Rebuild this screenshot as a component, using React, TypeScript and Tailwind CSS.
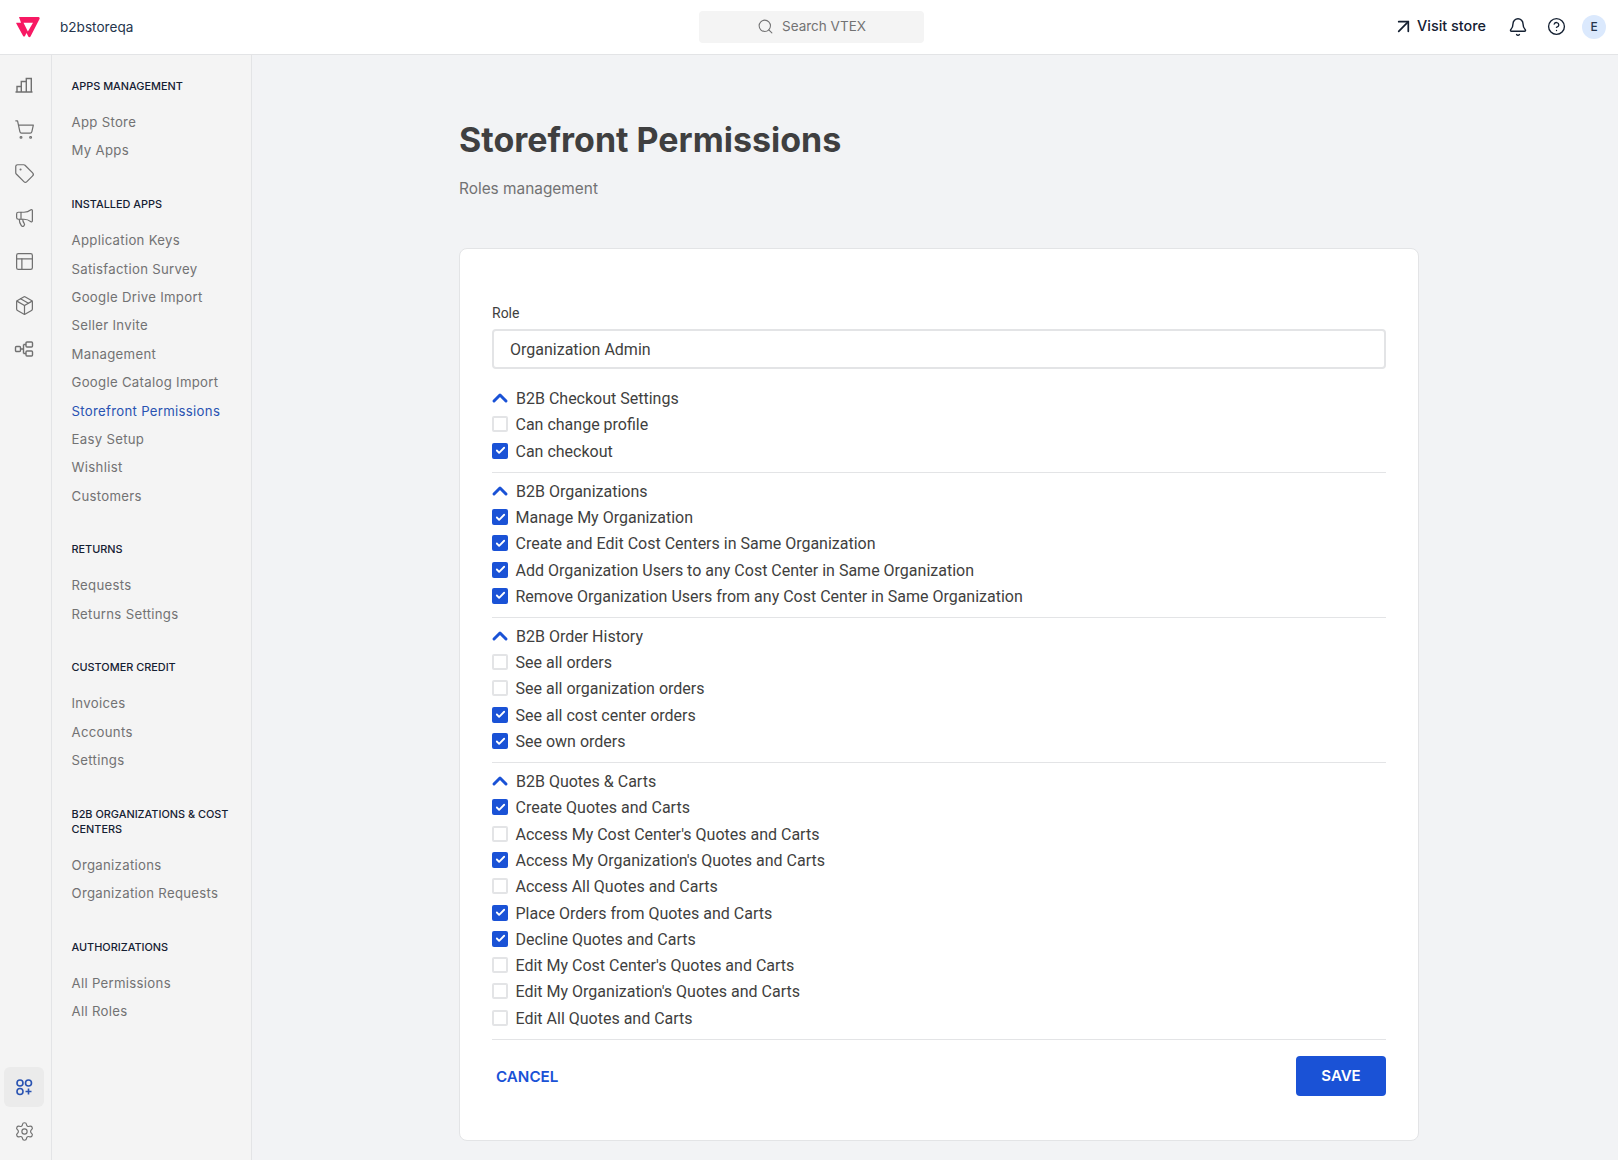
import React from "react";
import { ChevronUp, Package, Search, Settings, ShoppingCart, Tag, Megaphone, PanelsTopLeft, ArrowUpRight, Bell, CircleHelp, Check } from "lucide-react";

const nav = [
  { title: ["APPS MANAGEMENT"], items: ["App Store", "My Apps"] },
  {
    title: ["INSTALLED APPS"],
    items: ["Application Keys", "Satisfaction Survey", "Google Drive Import", "Seller Invite", "Management", "Google Catalog Import", "Storefront Permissions", "Easy Setup", "Wishlist", "Customers"],
  },
  { title: ["RETURNS"], items: ["Requests", "Returns Settings"] },
  { title: ["CUSTOMER CREDIT"], items: ["Invoices", "Accounts", "Settings"] },
  { title: ["B2B ORGANIZATIONS & COST", "CENTERS"], items: ["Organizations", "Organization Requests"] },
  { title: ["AUTHORIZATIONS"], items: ["All Permissions", "All Roles"] },
];

const groups: { name: string; rows: [string, boolean][] }[] = [
  { name: "B2B Checkout Settings", rows: [["Can change profile", false], ["Can checkout", true]] },
  {
    name: "B2B Organizations",
    rows: [
      ["Manage My Organization", true],
      ["Create and Edit Cost Centers in Same Organization", true],
      ["Add Organization Users to any Cost Center in Same Organization", true],
      ["Remove Organization Users from any Cost Center in Same Organization", true],
    ],
  },
  {
    name: "B2B Order History",
    rows: [["See all orders", false], ["See all organization orders", false], ["See all cost center orders", true], ["See own orders", true]],
  },
  {
    name: "B2B Quotes & Carts",
    rows: [
      ["Create Quotes and Carts", true],
      ["Access My Cost Center's Quotes and Carts", false],
      ["Access My Organization's Quotes and Carts", true],
      ["Access All Quotes and Carts", false],
      ["Place Orders from Quotes and Carts", true],
      ["Decline Quotes and Carts", true],
      ["Edit My Cost Center's Quotes and Carts", false],
      ["Edit My Organization's Quotes and Carts", false],
      ["Edit All Quotes and Carts", false],
    ],
  },
];

function Logo() {
  return (
    <svg width="24" height="21" viewBox="0 0 24 21">
      <path d="M3 0H22.500c1 0 1.500 1 1 2L14.500 19.500c-.6 1-1.600 1-2.200 0L10.500 16 9 19c-.5.8-1.400.8-1.900 0L.3 6.500C0 6 .3 5.700.8 5.700H5z" fill="#f71963" />
      <path d="M7.500 5.700H17L11.900 14.500z" fill="#fff" />
    </svg>
  );
}

function ChartIcon() {
  return (
    <svg width="20" height="20" viewBox="0 0 20 20" fill="none" stroke="currentColor" strokeWidth="1.400">
      <path d="M1.500 17h17M3 17v-5.500h4.300V17M7.300 17V6.500h5V17M12.300 17V3.500h5V17" />
    </svg>
  );
}

function FlowIcon() {
  return (
    <svg width="20" height="20" viewBox="0 0 20 20" fill="none" stroke="currentColor" strokeWidth="1.400">
      <rect x="1.500" y="7.500" width="5" height="5" rx="1" />
      <rect x="12" y="3" width="6.500" height="5" rx="1" />
      <rect x="12" y="12" width="6.500" height="5" rx="1" />
      <path d="M6.500 10h3M9.500 5.500v9M9.500 5.500H12M9.500 14.500H12" />
    </svg>
  );
}

function Row({ label, checked }: { label: string; checked: boolean }) {
  return (
    <div className="flex h-[26.3px] items-center">
      {checked ? (
        <span className="flex h-4 w-4 items-center justify-center rounded-[2px] bg-[#1a52d6]">
          <Check size={11} strokeWidth={4} className="text-white" />
        </span>
      ) : (
        <span className="h-4 w-4 rounded-[2px] border-2 border-[#e3e4e6] bg-white" />
      )}
      <span className="ml-[7.500px] pt-[2px] text-[16px] text-[#3f3f40]">{label}</span>
    </div>
  );
}

export default function App() {
  return (
    <div className="flex h-[1160px] w-full flex-col overflow-hidden bg-[#f2f3f5] font-['Inter',sans-serif]">
      <header className="relative flex h-[55px] shrink-0 items-center border-b border-[#e3e4e6] bg-white">
        <div className="ml-4 flex items-center">
          <Logo />
          <span className="ml-[20px] text-[13.600px] text-[#25354d]">b2bstoreqa</span>
        </div>
        <div className="absolute left-[699px] top-[11px] flex h-8 w-[225px] items-center justify-center gap-2 rounded bg-[#f4f4f4] pb-[2px] text-[13.500px] text-[#727273]">
          <Search size={17} strokeWidth={1.500} />
          <span>Search VTEX</span>
        </div>
        <div className="ml-auto mr-3 flex items-center text-[#142032]">
          <ArrowUpRight size={23} strokeWidth={1.800} />
          <span className="mb-[3px] ml-[2px] text-[14.400px] font-medium">Visit store</span>
          <Bell size={20} strokeWidth={1.700} className="ml-[22px]" />
          <CircleHelp size={19} strokeWidth={1.700} className="ml-[19px]" />
          <span className="ml-[16px] flex h-6 w-6 items-center justify-center rounded-full bg-[#dbe9fd] text-[12px] font-medium text-[#25354d]">E</span>
        </div>
      </header>

      <div className="flex min-h-0 flex-1">
        <aside className="flex w-[52px] shrink-0 flex-col items-center border-r border-[#e3e4e6] bg-[#f4f4f4] pb-[9px] pr-[3px] pt-[8px] text-[#707070]">
          {[ChartIcon, ShoppingCart, Tag, Megaphone, PanelsTopLeft, Package, FlowIcon].map((Icon, i) => (
            <div key={i} className="flex h-11 w-10 items-center justify-center">
              <Icon size={21} strokeWidth={1.400} />
            </div>
          ))}
          <div className="mt-auto flex h-10 w-10 items-center justify-center rounded-md bg-[#ebebeb] text-[#2953b2]">
            <svg width="17" height="17" viewBox="0 0 17 17" fill="none" stroke="currentColor" strokeWidth="1.600">
              <circle cx="4" cy="4" r="3" />
              <circle cx="12.500" cy="4" r="3" />
              <circle cx="4" cy="12.500" r="3" />
              <path d="M12.500 9.500v6M9.500 12.500h6" />
            </svg>
          </div>
          <div className="mt-1 flex h-10 w-10 items-center justify-center">
            <Settings size={21} strokeWidth={1.300} />
          </div>
        </aside>

        <nav className="w-[200px] shrink-0 border-r border-[#e3e4e6] bg-[#f4f4f4] pl-[19.500px] pt-[24px]">
          {nav.map((section) => (
            <div key={section.title[0]} className="mb-[31.500px]">
              <div className="mb-[14.800px] text-[10.900px] font-medium leading-[15px] text-[#142032]">
                {section.title.map((t) => (
                  <div key={t}>{t}</div>
                ))}
              </div>
              {section.items.map((item) => (
                <div key={item} className={`flex h-[28.400px] items-center text-[13.200px] tracking-[0.3px] ${item === "Storefront Permissions" ? "text-[#2953b2]" : "text-[#727273]"}`}>
                  {item}
                </div>
              ))}
            </div>
          ))}
        </nav>

        <main className="min-w-0 flex-1 pl-[207px]">
          <h1 className="mt-[65px] text-[34px] font-bold leading-[40px] text-[#3f3f40]">Storefront Permissions</h1>
          <p className="mt-[19px] text-[15.400px] leading-[20px] text-[#727273]">Roles management</p>

          <section className="mt-[49px] w-[960px] rounded-lg border border-[#e3e4e6] bg-white px-[32px] pb-[44px] pt-[54px] font-['Roboto',sans-serif]">
            <label className="block text-[14px] leading-[20px] text-[#3f3f40]">Role</label>
            <div className="mt-[6px] flex h-10 items-center rounded border-2 border-[#e3e4e6] px-[16px] pt-[2px] text-[16px] text-[#3f3f40]">Organization Admin</div>

            <div className="mt-[16px]">
              {groups.map((g) => (
                <div key={g.name} className="mb-[4.700px] border-b border-[#e3e4e6] pb-[8px]">
                  <div className="flex h-[26.3px] items-center text-[16px] text-[#3f3f40]">
                    <ChevronUp size={24} strokeWidth={3} className="ml-[-4px] text-[#1a52d6]" />
                    <span className="ml-[4px] pt-[2px]">{g.name}</span>
                  </div>
                  {g.rows.map(([label, checked]) => (
                    <Row key={label} label={label} checked={checked} />
                  ))}
                </div>
              ))}
            </div>

            <div className="mt-[16px] flex items-center justify-between">
              <span className="ml-[4px] pt-[3px] font-['Inter',sans-serif] text-[15.200px] font-semibold text-[#1a52d6]">CANCEL</span>
              <button className="h-10 w-[90px] rounded-[4px] bg-[#1a52d6] pt-[1px] font-['Inter',sans-serif] text-[15px] font-semibold text-white">SAVE</button>
            </div>
          </section>
        </main>
      </div>
    </div>
  );
}
